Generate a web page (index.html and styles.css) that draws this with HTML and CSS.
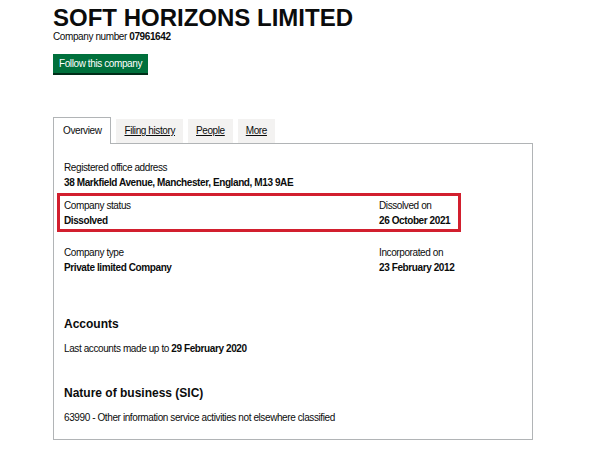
FILE: index.html
```html
<!DOCTYPE html>
<html lang="en">
<head>
    <meta charset="UTF-8">
    <meta name="viewport" content="width=device-width, initial-scale=1.0">
    <title>SOFT HORIZONS LIMITED - Company overview</title>
    <link rel="stylesheet" href="styles.css">
</head>
<body>

    <div class="page">
        <h1 class="company-name">SOFT HORIZONS LIMITED</h1>
        <p class="company-number">Company number <strong>07961642</strong></p>
        <a href="#" class="button">Follow this company</a>

        <ul class="tabs">
            <li class="tab active"><span>Overview</span></li>
            <li class="tab"><a href="#">Filing history</a></li>
            <li class="tab"><a href="#">People</a></li>
            <li class="tab"><a href="#">More</a></li>
        </ul>

        <div class="panel">
            <dl class="field">
                <dt>Registered office address</dt>
                <dd>38 Markfield Avenue, Manchester, England, M13 9AE</dd>
            </dl>

            <div class="row highlight">
                <dl class="field col-left">
                    <dt>Company status</dt>
                    <dd>Dissolved</dd>
                </dl>
                <dl class="field">
                    <dt>Dissolved on</dt>
                    <dd>26 October 2021</dd>
                </dl>
            </div>

            <div class="row type-row">
                <dl class="field col-left">
                    <dt>Company type</dt>
                    <dd>Private limited Company</dd>
                </dl>
                <dl class="field">
                    <dt>Incorporated on</dt>
                    <dd>23 February 2012</dd>
                </dl>
            </div>

            <h2 class="section-title accounts">Accounts</h2>
            <p class="text">Last accounts made up to <strong>29 February 2020</strong></p>

            <h2 class="section-title sic">Nature of business (SIC)</h2>
            <p class="text">63990 - Other information service activities not elsewhere classified</p>
        </div>
    </div>

</body>
</html>
```

FILE: styles.css
```css
body {
    margin: 0;
    font-family: "Liberation Sans", Arial, sans-serif;
    color: #0b0c0c;
    background: #fff;
}
.page {
    padding: 5px 0 0 53px;
    width: 480px;
}
.company-name {
    margin: 0;
    font-size: 24px;
    line-height: 26px;
    font-weight: bold;
}
.company-number {
    margin: 0;
    font-size: 10px;
    line-height: 12px;
    letter-spacing: -0.4px;
}
.button {
    display: inline-block;
    margin-top: 11px;
    padding: 3px 6px;
    background: #00703c;
    box-shadow: 0 2px 0 #002d18;
    color: #fff;
    font-size: 10px;
    line-height: 13px;
    letter-spacing: -0.4px;
    text-decoration: none;
}
.tabs {
    display: flex;
    align-items: flex-end;
    list-style: none;
    margin: 44px 0 0 0;
    padding: 0;
    height: 26px;
}
.tab {
    margin-right: 5px;
    padding: 5px 8px 6px;
    background: #f3f2f1;
    font-size: 10px;
    line-height: 13px;
    letter-spacing: -0.4px;
}
.tab a {
    color: #0b0c0c;
    text-decoration: underline;
}
.tab.active {
    position: relative;
    z-index: 1;
    margin-bottom: -1px;
    padding: 6px 9px 7px;
    background: #fff;
    border: 1px solid #b1b4b6;
    border-bottom: none;
}
.panel {
    border: 1px solid #b1b4b6;
    padding: 16px 10px 14px;
}
.field {
    margin: 0;
    font-size: 10px;
    line-height: 15px;
    letter-spacing: -0.4px;
}
.field dt {
    margin: 0;
}
.field dd {
    margin: 0;
    font-weight: bold;
}
.row {
    display: flex;
}
.col-left {
    width: 315px;
}
.highlight {
    width: 390px;
    margin: 3px 0 0 -7px;
    padding: 2px 4px 1px;
    border: 3px solid #d21f2e;
}
.type-row {
    margin-top: 13px;
}
.section-title {
    margin: 0;
    font-size: 12px;
    line-height: 15px;
    font-weight: bold;
}
.accounts {
    margin-top: 42px;
}
.sic {
    margin-top: 30px;
}
.text {
    margin: 9px 0 0;
    font-size: 10px;
    line-height: 15px;
    letter-spacing: -0.4px;
}
```
